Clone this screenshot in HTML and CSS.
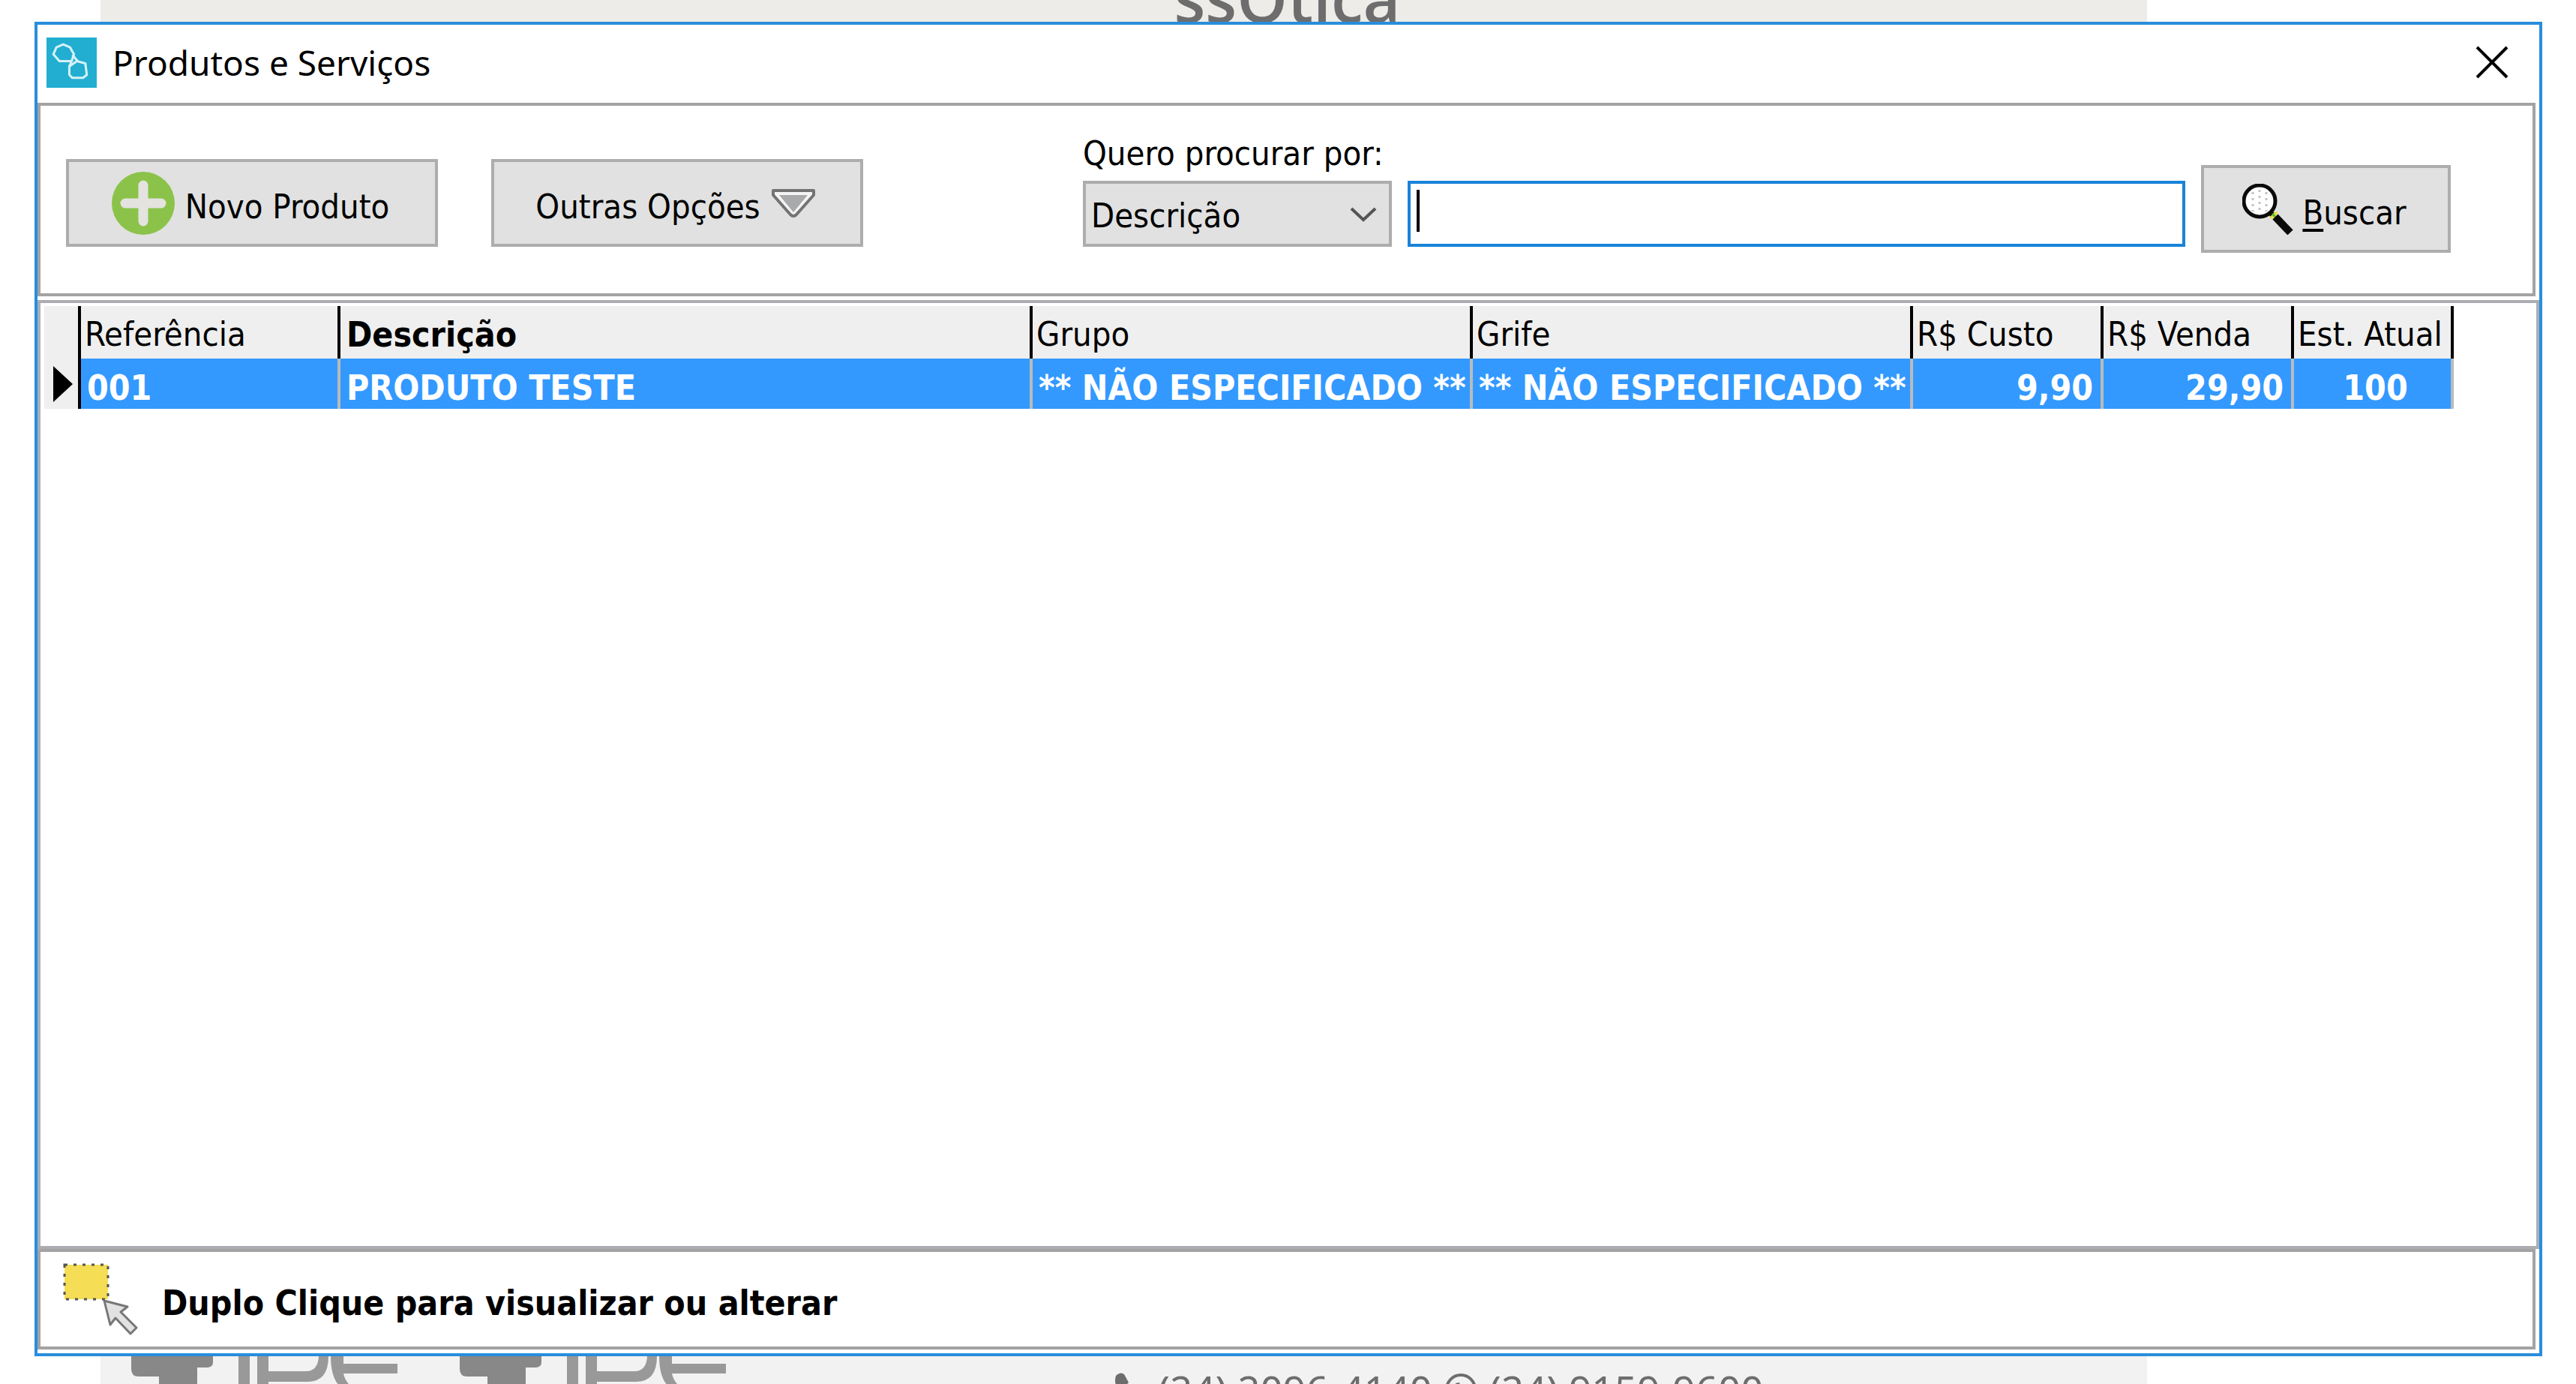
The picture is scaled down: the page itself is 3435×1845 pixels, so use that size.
FILE: index.html
```html
<!DOCTYPE html>
<html lang="pt-BR">
<head>
<meta charset="utf-8">
<title>Produtos e Serviços</title>
<link rel="stylesheet" href="styles.css">
</head>
<body>
<div class="backdrop" aria-hidden="true">
  <div class="backdrop-top"><span class="brand">ssOtica</span></div>
  <div class="backdrop-bottom">
    <div class="logos">
      <svg class="logo" viewBox="0 0 438 40">
        <path fill="#888" d="M0 0H109V8Q109 15 101 15H88V40H37V27H10Q0 27 0 17Z"/>
        <path fill="#999" d="M143 0h15v40h-15zM168 0h15v20h50q16 0 17-20h13q0 34-28 34h-52v6h-15z"/>
        <path fill="#999" d="M266 0h17v10h72v13h-72q2 10 10 17h-15q-12-12-12-40z"/>
      </svg>
      <svg class="logo" viewBox="0 0 438 40">
        <path fill="#888" d="M0 0H109V8Q109 15 101 15H88V40H37V27H10Q0 27 0 17Z"/>
        <path fill="#999" d="M143 0h15v40h-15zM168 0h15v20h50q16 0 17-20h13q0 34-28 34h-52v6h-15z"/>
        <path fill="#999" d="M266 0h17v10h72v13h-72q2 10 10 17h-15q-12-12-12-40z"/>
      </svg>
    </div>
    <div class="phones">
      <svg width="44" height="44" viewBox="0 0 44 44"><path fill="#6d6d6d" d="M4 4Q10-2 15 2L21 13L15 19Q20 28 27 32L33 26L42 33Q43 38 38 42Q24 44 12 30Q0 16 4 4Z"/></svg>
      <span>(24) 2096-4140</span>
      <svg width="44" height="44" viewBox="0 0 44 44"><circle cx="22" cy="22" r="19" fill="none" stroke="#6d6d6d" stroke-width="4"/><path fill="#6d6d6d" d="M15 14l5-1 2 6-2 3 6 5 3-2 5 3-2 4q-18 2-17-18z"/></svg>
      <span>(24) 9159-9600</span>
    </div>
  </div>
</div>

<main class="window">
  <header class="titlebar">
    <svg class="app-icon" viewBox="0 0 66 66" aria-hidden="true">
      <rect width="66" height="66" fill="#22aed1"/>
      <g fill="none" stroke="#d5f1f8" stroke-width="3" stroke-linejoin="round">
        <path d="M22 9L31 13L36 22L33 31H17L9 22L13 13Z"/>
        <path d="M40 31L51 34L53 49L48 53H34L30 49V38Z"/>
        <path d="M34 23L41 31M33 31L30 38"/>
      </g>
    </svg>
    <h1>Produtos e Serviços</h1>
    <button class="close" type="button" aria-label="Fechar">
      <svg width="44" height="44" viewBox="0 0 44 44"><path d="M2 2L42 42M42 2L2 42" stroke="#000" stroke-width="4"/></svg>
    </button>
  </header>

  <form class="toolbar" onsubmit="return false">
    <div class="actions">
      <button class="btn btn-wide" type="button">
        <svg width="84" height="84" viewBox="0 0 84 84" aria-hidden="true"><circle cx="42" cy="42" r="42" fill="#8bc34a"/><path d="M42 18V66M18 42H66" stroke="#e4e3e0" stroke-width="13" stroke-linecap="round"/></svg>
        <span>Novo Produto</span>
      </button>
      <button class="btn btn-wide" type="button">
        <span>Outras Opções</span>
        <svg width="60" height="40" viewBox="0 0 60 40" aria-hidden="true"><path d="M3 3H57V9L34 35Q30 39 26 35L3 9Z" fill="#f4f4f4" stroke="#737373" stroke-width="4" stroke-linejoin="round"/><path d="M11 9H49L30 32Z" fill="#a9aaab"/></svg>
      </button>
    </div>
    <div class="field">
      <label for="campo">Quero procurar por:</label>
      <div class="select">
        <select id="campo"><option>Descrição</option></select>
        <svg width="36" height="22" viewBox="0 0 36 22" aria-hidden="true"><path d="M2 3L18 18L34 3" fill="none" stroke="#555" stroke-width="4"/></svg>
      </div>
    </div>
    <div class="query">
      <input type="text" aria-label="Texto da busca">
      <span class="caret"></span>
    </div>
    <button class="btn btn-search" type="submit">
      <svg width="68" height="68" viewBox="0 0 68 68" aria-hidden="true">
        <circle cx="23" cy="23" r="21" fill="#fff" stroke="#0a0a0a" stroke-width="5"/>
        <path d="M14 11v26M23 8v32M32 11v26" stroke="#c4c4c4" stroke-width="3" stroke-dasharray="3 5"/>
        <path d="M36 37l5 5" stroke="#0a0a0a" stroke-width="7"/>
        <path d="M38 46L46 38" stroke="#e9e23a" stroke-width="4"/>
        <path d="M40 40l4 4" stroke="#58b52f" stroke-width="3"/>
        <path d="M44 44L64 65" stroke="#0a0a0a" stroke-width="10"/>
      </svg>
      <span><u>B</u>uscar</span>
    </button>
  </form>

  <section class="grid">
    <table>
      <colgroup>
        <col class="c-mark"><col class="c-ref"><col><col class="c-group"><col class="c-group"><col class="c-price"><col class="c-price"><col class="c-stock">
      </colgroup>
      <thead>
        <tr><th></th><th>Referência</th><th class="sorted">Descrição</th><th>Grupo</th><th>Grife</th><th>R$ Custo</th><th>R$ Venda</th><th>Est. Atual</th></tr>
      </thead>
      <tbody>
        <tr>
          <td class="mark"><svg width="26" height="48" viewBox="0 0 26 48" aria-hidden="true"><path d="M0 0L26 24L0 48Z"/></svg></td>
          <td>001</td><td>PRODUTO TESTE</td><td>** NÃO ESPECIFICADO **</td><td>** NÃO ESPECIFICADO **</td><td class="num">9,90</td><td class="num">29,90</td><td class="mid">100</td>
        </tr>
      </tbody>
    </table>
  </section>

  <footer class="hint">
    <svg width="100" height="96" viewBox="0 0 100 96" aria-hidden="true">
      <rect x="2" y="2" width="58" height="46" fill="#f5dd55" stroke="#555" stroke-width="3" stroke-dasharray="4 8"/>
      <path d="M55 50L86 58L77 65L98 86L90 94L70 73L63 82Z" fill="#e2e2e2" stroke="#777" stroke-width="3" stroke-linejoin="round"/>
    </svg>
    <strong>Duplo Clique para visualizar ou alterar</strong>
  </footer>
</main>
</body>
</html>
```
FILE: styles.css
```css
* { box-sizing: border-box; }

body {
  margin: 0;
  min-height: 100vh;
  padding: 29px 45px 37px 46px;
  display: flex;
  background: #fff;
  color: #000;
  font: 45px/56px "DejaVu Sans Condensed", "DejaVu Sans", sans-serif;
  overflow: hidden;
}

button, input, select { font: inherit; color: inherit; border-radius: 0; margin: 0; }
svg { display: block; flex: none; }

/* Page behind the dialog */
.backdrop {
  position: absolute;
  inset: 0 572px 0 134px;
  z-index: -1;
  display: flex;
  flex-direction: column;
  justify-content: space-between;
  overflow: hidden;
  color: #6d6d6d;
}
.backdrop-top {
  height: 32px;
  background: #edece8;
  display: flex;
  align-items: flex-end;
  justify-content: center;
  padding-left: 436px;
}
.brand { font: 600 86px/84px "Open Sans", sans-serif; margin-bottom: -7px; }
.backdrop-bottom {
  height: 37px;
  background: #f2f2f2;
  display: flex;
  overflow: hidden;
}
.logos { display: flex; padding-left: 41px; }
.logo { width: 438px; height: 40px; }
.phones {
  display: flex;
  align-items: flex-start;
  gap: 16px;
  padding: 18px 0 0 433px;
  white-space: nowrap;
  font: 53px/54px "Noto Sans", sans-serif;
}
.phones svg { margin-top: 4px; }

/* Dialog */
.window {
  flex: 1;
  min-width: 0;
  display: flex;
  flex-direction: column;
  background: #fff;
  border: 4px solid #2a8ddb;
  padding-bottom: 5px;
}
.titlebar {
  height: 104px;
  display: flex;
  align-items: center;
  gap: 21px;
  padding: 0 41px 4px 12px;
}
.app-icon { width: 67px; height: 67px; }
.titlebar h1 { flex: 1; margin: 0; font: 46px/56px "Noto Sans", sans-serif; }
.close { border: 0; padding: 0; background: none; }

.toolbar {
  display: flex;
  align-items: flex-end;
  margin: 0 5px 5px 0;
  padding: 36px 109px 54px 34px;
  border: 4px solid #a3a3a3;
}
.actions { display: flex; gap: 71px; margin: 0 293px 8px 0; }
.btn {
  height: 117px;
  padding: 0 4px 0 0;
  display: flex;
  align-items: center;
  justify-content: center;
  gap: 12px;
  background: #e1e1e1;
  border: 4px solid #adadad;
  white-space: nowrap;
}
.btn span { padding-top: 11px; }
.btn u { text-underline-offset: 6px; text-decoration-thickness: 4px; }
.btn-wide { width: 496px; gap: 14px; }
.btn-search { width: 333px; }

.field { display: flex; flex-direction: column; gap: 8px; margin-bottom: 8px; }
.select { position: relative; width: 412px; }
.select select {
  appearance: none;
  display: block;
  width: 100%;
  height: 88px;
  padding: 6px 60px 0 7px;
  background: #e1e1e1;
  border: 4px solid #adadad;
}
.select svg { position: absolute; right: 20px; top: 34px; pointer-events: none; }

.query { position: relative; flex: 1; margin: 0 21px 8px; }
.query input {
  display: block;
  width: 100%;
  height: 88px;
  padding: 0 8px;
  background: #fff;
  border: 4px solid #1883d9;
  outline: 0;
  caret-color: transparent;
}
.caret { position: absolute; left: 12px; top: 12px; width: 4px; height: 56px; background: #000; }

.grid {
  flex: 1;
  border: 4px solid #abadb3;
  border-color: #abadb3 #a6b0ba;
  padding: 4px 110px 0 5px;
}
table { width: 100%; table-layout: fixed; border-collapse: separate; border-spacing: 0; }
.c-mark { width: 49px; }
.c-ref { width: 346px; }
.c-group { width: 587px; }
.c-price { width: 254px; }
.c-stock { width: 213px; }
th, td { overflow: hidden; white-space: nowrap; text-align: left; border-right: 4px solid #b9bbbd; }
th {
  height: 70px;
  padding: 6px 0 0 5px;
  font-weight: normal;
  background: #efefef;
  border-color: #000;
}
th.sorted { font-size: 46px; font-weight: bold; padding-left: 8px; }
td {
  height: 67px;
  padding: 10px 0 0 8px;
  font-size: 46px;
  font-weight: bold;
  color: #fff;
  background: #3399ff;
}
td.num { text-align: right; padding-right: 10px; }
td.mid { text-align: center; }
td.mark { background: #efefef; border-color: #000; padding: 0 0 0 12px; }

.hint {
  display: flex;
  align-items: center;
  gap: 32px;
  height: 134px;
  margin-right: 5px;
  padding-left: 30px;
  border: 4px solid #a3a3a3;
}
.hint strong { font-size: 46px; padding-top: 10px; }
```
